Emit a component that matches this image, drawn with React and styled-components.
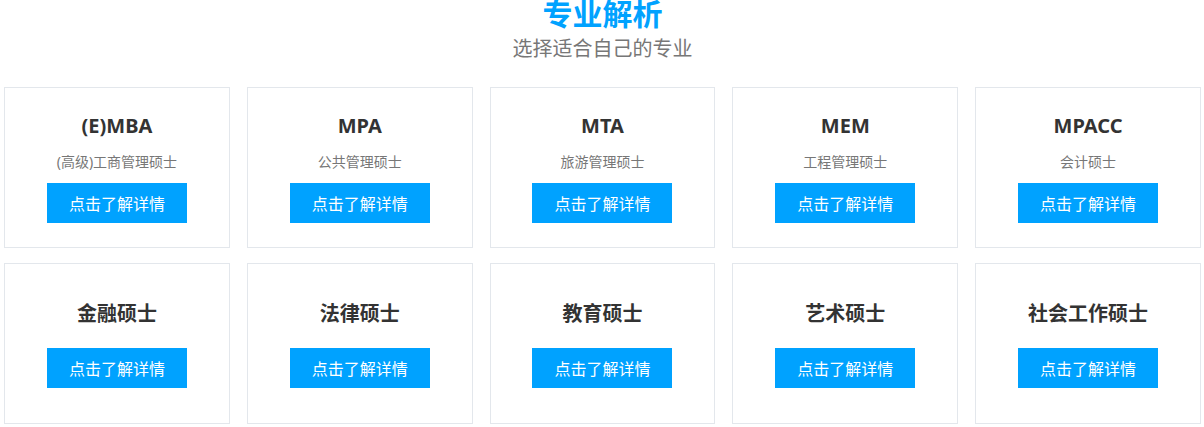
import React from "react";
import styled, { createGlobalStyle } from "styled-components";

const Global = createGlobalStyle`
  html, body { margin: 0; padding: 0; background: #fff; }
  body { font-family: "Noto Sans", "Noto Sans CJK SC", sans-serif; }
  * { box-sizing: border-box; }
`;

const Section = styled.section`
  width: 1204px;
  padding: 0 3px 0 4px;
  overflow: hidden;
`;

const Head = styled.header`
  display: flex;
  flex-direction: column;
  align-items: center;
  margin-bottom: 29px;
`;

const Heading = styled.h2`
  margin: -3px 0 11px;
  font-size: 30px;
  line-height: 30px;
  font-weight: 700;
  color: #00a2ff;
  font-family: "Noto Sans CJK SC", sans-serif;
`;

const Lead = styled.p`
  margin: 0;
  font-size: 20px;
  line-height: 20px;
  color: #777;
  font-family: "Noto Sans CJK SC", sans-serif;
`;

const Grid = styled.div`
  display: grid;
  grid-template-columns: repeat(5, 1fr);
  column-gap: 17px;
  row-gap: 15px;
`;

const Card = styled.div`
  height: 161px;
  border: 1px solid #e3e7ec;
  display: flex;
  flex-direction: column;
  align-items: center;
  justify-content: center;
`;

const Title = styled.h3`
  margin: 0 0 ${(p) => (p.$hasSub ? "12px" : "20px")};
  font-size: 20px;
  line-height: 28px;
  font-weight: 700;
  color: #333;
`;

const Sub = styled.p`
  margin: 0 0 11px;
  font-size: 14px;
  line-height: 20px;
  color: #777;
`;

const Button = styled.a`
  display: flex;
  align-items: center;
  justify-content: center;
  width: 140px;
  height: 40px;
  background: #00a2ff;
  color: #fff;
  font-size: 16px;
  text-decoration: none;
  cursor: pointer;
`;

const items = [
  { t: "(E)MBA", s: "(高级)工商管理硕士" },
  { t: "MPA", s: "公共管理硕士" },
  { t: "MTA", s: "旅游管理硕士" },
  { t: "MEM", s: "工程管理硕士" },
  { t: "MPACC", s: "会计硕士" },
  { t: "金融硕士" },
  { t: "法律硕士" },
  { t: "教育硕士" },
  { t: "艺术硕士" },
  { t: "社会工作硕士" },
];

export default function App() {
  return (
    <>
      <Global />
      <Section>
        <Head>
          <Heading>专业解析</Heading>
          <Lead>选择适合自己的专业</Lead>
        </Head>
        <Grid>
          {items.map((it) => (
            <Card key={it.t}>
              <Title $hasSub={!!it.s}>{it.t}</Title>
              {it.s && <Sub>{it.s}</Sub>}
              <Button>点击了解详情</Button>
            </Card>
          ))}
        </Grid>
      </Section>
    </>
  );
}
